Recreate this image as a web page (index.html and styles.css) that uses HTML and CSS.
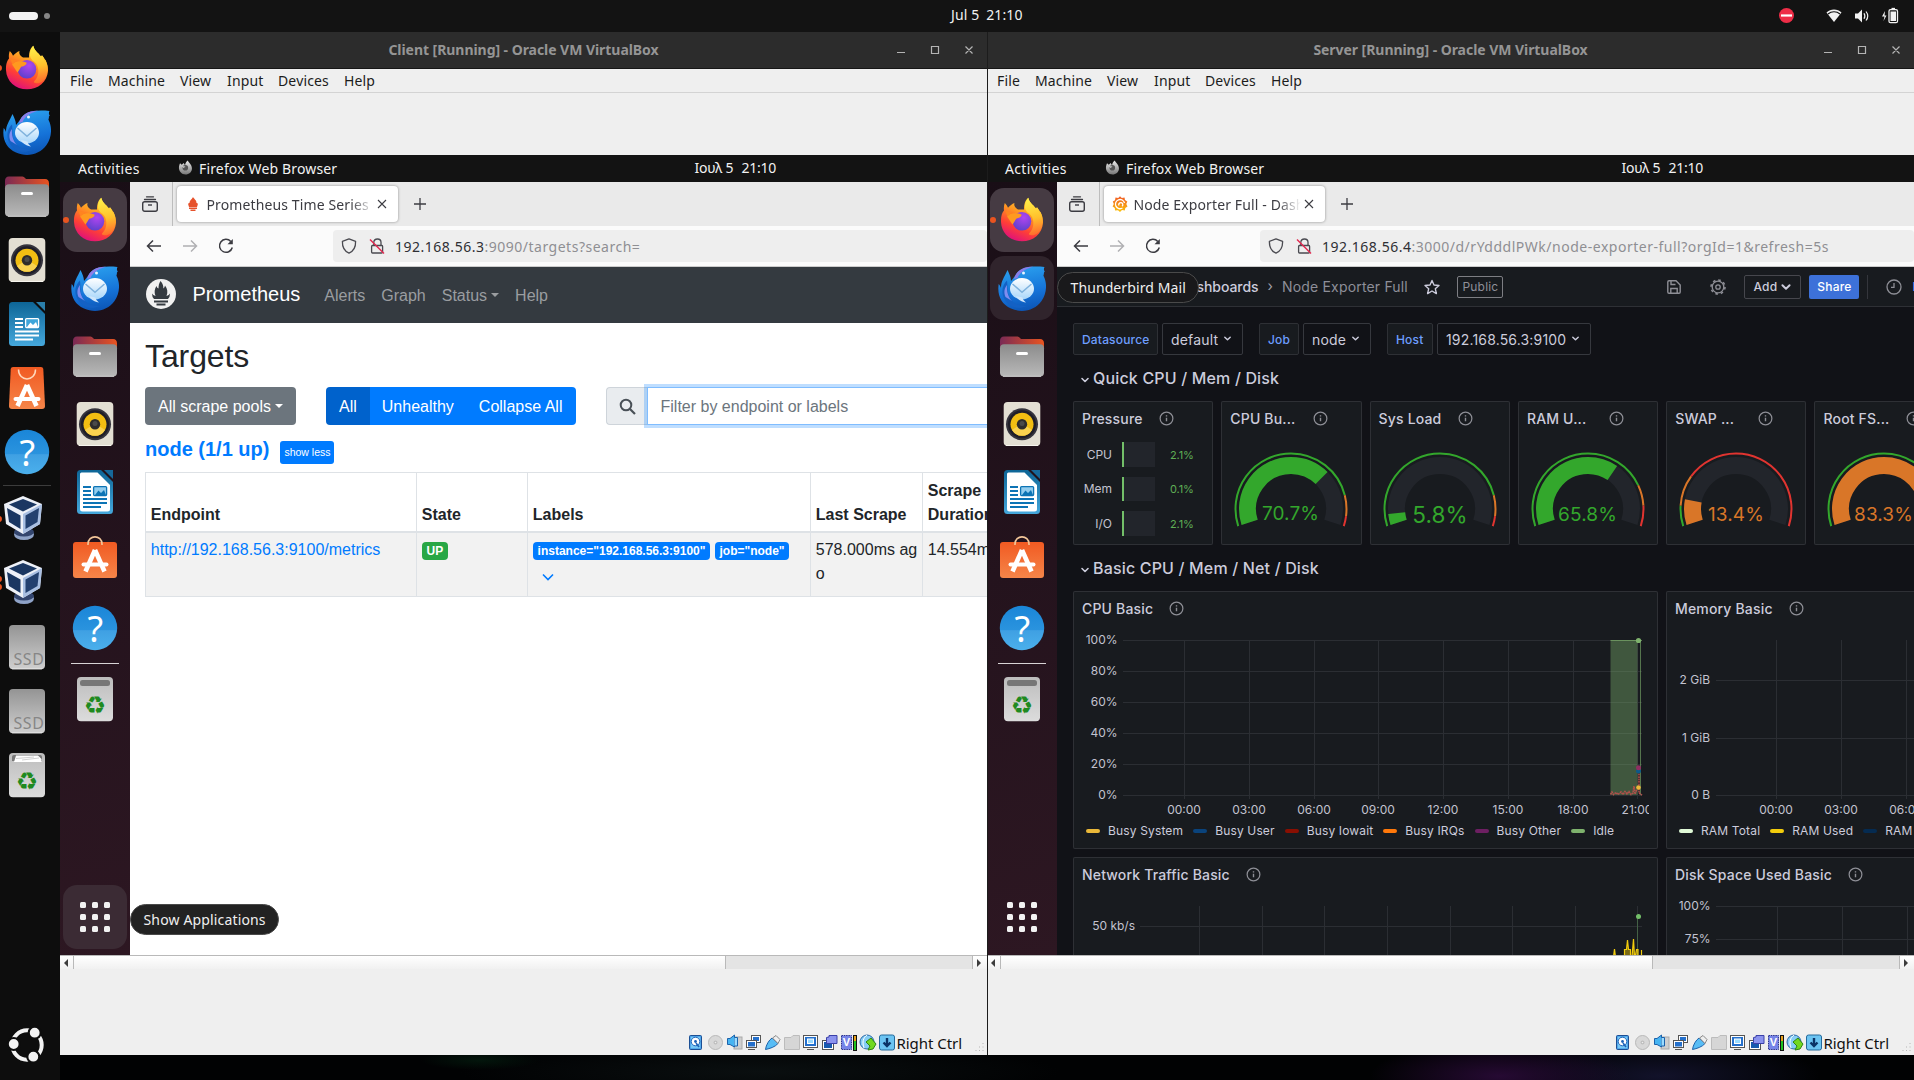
FILE: index.html
```html
<!DOCTYPE html>
<html lang="en">
<head>
<meta charset="utf-8">
<title>Desktop</title>
<link rel="stylesheet" href="styles.css">
</head>
<body>
<svg class="defs" width="0" height="0" aria-hidden="true">
  <defs>
    <linearGradient id="g-fire" x1=".8" y1="0" x2=".35" y2="1"><stop offset="0" stop-color="#ffe23c"/><stop offset=".4" stop-color="#ff9a22"/><stop offset=".72" stop-color="#ff4035"/><stop offset="1" stop-color="#e0117a"/></linearGradient>
    <linearGradient id="g-flame" x1=".4" y1="0" x2=".5" y2="1"><stop offset="0" stop-color="#fff24a"/><stop offset=".55" stop-color="#ffc02c"/><stop offset="1" stop-color="#ff6a2e"/></linearGradient>
    <radialGradient id="g-globe" cx=".6" cy=".3" r=".8"><stop offset="0" stop-color="#b145f0"/><stop offset="1" stop-color="#5540c8"/></radialGradient>
    <linearGradient id="g-bird" x1=".4" y1="0" x2=".6" y2="1"><stop offset="0" stop-color="#2aa0ee"/><stop offset=".6" stop-color="#1572d8"/><stop offset="1" stop-color="#0c55b5"/></linearGradient>
    <linearGradient id="g-mail" x1="0" y1="0" x2="0" y2="1"><stop offset="0" stop-color="#fff"/><stop offset="1" stop-color="#a8d6fa"/></linearGradient>
    <linearGradient id="g-folder" x1="0" y1="0" x2="1" y2="0"><stop offset="0" stop-color="#7a2a55"/><stop offset="1" stop-color="#e95420"/></linearGradient>
    <linearGradient id="g-gray" x1="0" y1="0" x2="0" y2="1"><stop offset="0" stop-color="#8c8c8c"/><stop offset="1" stop-color="#b9b9b9"/></linearGradient>
    <linearGradient id="g-ssd" x1="0" y1="0" x2="0" y2="1"><stop offset="0" stop-color="#949494"/><stop offset="1" stop-color="#cfcfcf"/></linearGradient>
    <linearGradient id="g-bin" x1="0" y1="0" x2="0" y2="1"><stop offset="0" stop-color="#bdbdbd"/><stop offset="1" stop-color="#dcdcdc"/></linearGradient>
    <linearGradient id="g-doc" x1="0" y1="0" x2="0" y2="1"><stop offset="0" stop-color="#0d6596"/><stop offset="1" stop-color="#45a8dc"/></linearGradient>
    <linearGradient id="g-bag" x1="0" y1="0" x2="0" y2="1"><stop offset="0" stop-color="#f15a22"/><stop offset="1" stop-color="#f58549"/></linearGradient>
    <linearGradient id="g-help" x1="0" y1="0" x2="0" y2="1"><stop offset="0" stop-color="#1a86d8"/><stop offset=".54" stop-color="#2a93de"/><stop offset=".56" stop-color="#3fa0e3"/><stop offset="1" stop-color="#4bb0ec"/></linearGradient>
    <linearGradient id="g-moon" x1="0" y1="0" x2="0" y2="1"><stop offset="0" stop-color="#eee"/><stop offset="1" stop-color="#777"/></linearGradient>
    <linearGradient id="g-graf" x1="0" y1="0" x2="0" y2="1"><stop offset="0" stop-color="#f05a28"/><stop offset="1" stop-color="#fbc30a"/></linearGradient>
    <clipPath id="axis-clip"><rect x="0" y="32" width="576" height="200"/></clipPath>

    <symbol id="i-firefox" viewBox="0 1 48 48">
      <path d="M3 27C2.800 21 4 18 6 15.500C5.600 12.500 6 10 6.800 8C8.300 9.600 9.300 11 10 12.700C12 10.500 14 9 16.500 8C15.800 10.300 16.500 12.500 20 14.500H26C26 9 27 5.500 30.300 2.700C31.300 7.500 35 9.500 38 13.500L39 12.500C44 18 45.200 23 45 27.500C44.500 39 35 46.300 24 46.300C12.500 46.300 3.500 38.500 3 27Z" fill="url(#g-fire)"/>
      <path d="M30.300 2.700C31.300 7.500 35 9.500 38 13.500L39 12.300C40.500 14 41.300 16 41.500 17.500L42.500 17C46 25 44.800 32 41 37C36 42.500 29 40 31.500 38C37 33 36.500 22 31 18.500C27 16 24.500 10 30.300 2.700Z" fill="url(#g-flame)"/>
      <circle cx="24" cy="26.300" r="9.300" fill="url(#g-globe)"/>
      <path d="M9 21.500C12 18 18 17.500 23.500 19.500C23.800 22 21 23.300 18.500 23.600C17 24.800 16.500 27.500 14.500 29.500C12.500 27 11 24 9 21.500Z" fill="#ff9a1f"/>
      <path d="M7 15C10 17 13 17 16.500 17.600C13 18.300 11 19.500 9.500 21.700Z" fill="#ff8420"/>
    </symbol>
    <symbol id="i-thunderbird" viewBox="0 0 48 48">
      <path d="M17 12C21 4 30 1.500 46.500 3C45.500 5 45.800 6 46.800 7.500C46 8 45.600 8.800 46 10C45.300 10.800 45.300 11.500 45.800 12.500C49.500 20 48.500 30 43.500 37C37 46.500 24 49.500 13 44.500C3 40 -1 31 .7 20C2 21.500 2.500 22.500 3 24C3 17 6 14 9.500 6C11 9 13 13 13 17Z" fill="url(#g-bird)"/>
      <path d="M16 15C18 7 25 2.500 35 2.800C28 4.500 22 8 19.500 14Z" fill="#8a7de8"/>
      <path d="M7 36C2 28 5 20 9 16.500C10 23 8 30 14 37C18 41 24 42 29 42C20 46 11 43 7 36Z" fill="#1461c4"/>
      <path d="M7.500 33C5.500 28 6.500 24 9 21C8.500 27 10 33 14 37Z" fill="#7f8df0"/>
      <ellipse cx="24" cy="24.700" rx="12" ry="10.600" fill="url(#g-mail)"/>
      <path d="M14.500 20L24 28.300L33.500 20" fill="none" stroke="#7fb2dd" stroke-width="1.500"/>
      <path d="M18 32C20 36 24 38 28 38.500C26 37 25 35.500 24.500 33.500Z" fill="#cfe6fb"/>
      <circle cx="25.500" cy="9" r="1.500" fill="#e8f4ff"/>
    </symbol>
    <symbol id="i-files" viewBox="0 0 48 48">
      <path d="M2 9Q2 4.500 6 4.500H19.500Q21 4.500 22 6L23 7H42Q46 7 46 11.500V20H2Z" fill="url(#g-folder)"/>
      <rect x="2" y="12.300" width="44" height="32.300" rx="4" fill="url(#g-gray)"/>
      <path d="M5 44.300H43" stroke="#d2d2d2" stroke-width="1"/>
      <rect x="18" y="20" width="12" height="3" rx="1.500" fill="#fff"/>
    </symbol>
    <symbol id="i-music" viewBox="0 0 48 48">
      <rect x="5.700" y="2" width="36.600" height="44" rx="4" fill="#e3dfd3"/>
      <path d="M8 45.500H40" stroke="#f7f5ee"/>
      <circle cx="24" cy="24.300" r="16" fill="#35343d"/><circle cx="24" cy="24.300" r="14" fill="#1f1e28"/>
      <circle cx="24" cy="24.300" r="11.500" fill="#f2be12"/><path d="M14 30A11.500 11.500 0 0 0 34 30L28 26H20Z" fill="#f9d250"/>
      <circle cx="24" cy="24.300" r="5.200" fill="#2e2c2b"/><circle cx="24" cy="23.500" r="2.500" fill="#4a4a4a"/>
    </symbol>
    <symbol id="i-writer-dark" viewBox="0 0 48 48">
      <path d="M9.500 2H30L42 14V42.500Q42 46 38.500 46H9.500Q6 46 6 42.500V5.500Q6 2 9.500 2Z" fill="url(#g-doc)"/>
      <path d="M33 2H42V11Z" fill="#2a7fab"/>
      <path d="M12 19H20M12 23H20M12 27H20M12 31.500H36M12 35.500H36M12 39.500H30" stroke="#fff" stroke-width="1.900"/>
      <rect x="22.600" y="18.600" width="13" height="9" rx="1" fill="#3fa6da" stroke="#fff" stroke-width="1.300"/><path d="M24 27L27.500 22.500L30 25L33 22L35 27Z" fill="#fff"/>
    </symbol>
    <symbol id="i-writer" viewBox="0 0 48 48">
      <path d="M9.500 2H30L42 14V42.500Q42 46 38.500 46H9.500Q6 46 6 42.500V5.500Q6 2 9.500 2Z" fill="url(#g-doc)"/>
      <path d="M10.500 4.500H26.500L39 17V41Q39 43.500 36.500 43.500H11.500Q9 43.500 9 41V6Q9 4.500 10.500 4.500Z" fill="#fff"/>
      <path d="M33 2H42V11Z" fill="#16689a"/>
      <path d="M12 19H20M12 23H20M12 27H20M12 31H36M12 35H36M12 39H30" stroke="#0d74b5" stroke-width="1.900"/>
      <rect x="22.600" y="18.600" width="13" height="9" rx="1" fill="#93cdee" stroke="#0d74b5" stroke-width="1.300"/><path d="M24 27L27.500 22.500L30 25L33 22L35 27Z" fill="#0d74b5"/>
    </symbol>
    <symbol id="i-store-dark" viewBox="0 0 48 48">
      <path d="M10 3H38Q40 3 40.300 5L42 42Q42 45 39 45H9Q6 45 6 42L7.700 5Q8 3 10 3Z" fill="url(#g-bag)"/>
      <path d="M15.500 5.500C15.500 18 32.500 18 32.500 5.500" fill="none" stroke="#ffd9bd" stroke-width="1.500"/>
      <path d="M24 21L14.500 42M24 21L33.500 42" stroke="#fff" stroke-width="4.600"/><path d="M12.500 35H35.500" stroke="#fff" stroke-width="4" stroke-linecap="round"/>
    </symbol>
    <symbol id="i-store" viewBox="0 0 48 48">
      <rect x="2" y="6" width="44" height="36" rx="3" fill="url(#g-bag)"/>
      <path d="M17 9V8C17 -1.500 31 -1.500 31 8V9" fill="none" stroke="#f4c79a" stroke-width="1.600"/>
      <path d="M24 14L14.500 35.500M24 14L33.500 35.500" stroke="#fff" stroke-width="4.600"/><path d="M12.500 28.500H35.500" stroke="#fff" stroke-width="4" stroke-linecap="round"/>
    </symbol>
    <symbol id="i-help" viewBox="0 0 48 48">
      <circle cx="24" cy="24" r="22.200" fill="url(#g-help)"/>
      <text x="24.500" y="37.500" text-anchor="middle" font-family="Noto Sans, sans-serif" font-size="36" fill="#fff">?</text>
    </symbol>
    <symbol id="i-vbox" viewBox="0 1 48 48">
      <ellipse cx="21" cy="40.500" rx="10" ry="5.500" fill="#8fa3c8"/><ellipse cx="21" cy="38" rx="10" ry="4.500" fill="#33456e"/>
      <path d="M20 2L39 10L37 30L20 40L3 30L1 10Z" fill="#eef1f8"/>
      <path d="M20 20L39 10L37 30L20 40Z" fill="#a9bfe2"/>
      <path d="M20 5L34 10.500L20 17.500L6 10.500Z" fill="#1b3762"/>
      <path d="M4 14L17.500 21.500V35L6 28Z" fill="#1b3762"/><path d="M36 14L22.500 21.500V35L34.500 28Z" fill="#23406f"/>
    </symbol>
    <symbol id="i-ssd" viewBox="0 0 48 48">
      <rect x="6" y="2" width="36" height="44.300" rx="4" fill="url(#g-ssd)"/><path d="M9 45.800H39" stroke="#e6e6e6"/>
      <text x="10.500" y="41.500" font-family="Noto Sans, sans-serif" font-size="16" textLength="30.500" fill="#868686">SSD</text>
    </symbol>
    <symbol id="i-trash-full" viewBox="0 0 48 48">
      <rect x="6" y="2" width="36" height="44.300" rx="4" fill="url(#g-bin)"/>
      <path d="M9 10V6Q9 4 11 4H37Q39 4 39 6V10Z" fill="#777"/><path d="M11 11L13 4.500H35L38.500 8V11Z" fill="#fff"/><path d="M13 7.500L31 6M19 9L36 7" stroke="#bbb" stroke-width=".7"/>
      <text x="24" y="38.500" text-anchor="middle" font-family="DejaVu Sans, sans-serif" font-size="25" fill="#1f8a1f">♻</text>
    </symbol>
    <symbol id="i-trash" viewBox="0 0 48 48">
      <rect x="6" y="2" width="36" height="44.300" rx="4" fill="url(#g-bin)"/>
      <rect x="9" y="5" width="30" height="6" rx="2.500" fill="#777"/>
      <text x="24" y="38.500" text-anchor="middle" font-family="DejaVu Sans, sans-serif" font-size="25" fill="#1f8a1f">♻</text>
    </symbol>
    <symbol id="i-ubuntu" viewBox="0 0 48 48">
      <circle cx="24" cy="24" r="14.700" fill="none" stroke="#f2f2f2" stroke-width="4"/>
      <g fill="#f2f2f2" stroke="#0d0d0d" stroke-width="2.200"><circle cx="10.700" cy="23" r="6"/><circle cx="31.700" cy="11.700" r="6"/><circle cx="30.300" cy="35.700" r="6"/></g>
    </symbol>
    <symbol id="i-apps" viewBox="0 0 48 48">
      <g fill="#f2f2f2"><rect x="9" y="9" width="6" height="6" rx="1.500"/><rect x="21" y="9" width="6" height="6" rx="1.500"/><rect x="33" y="9" width="6" height="6" rx="1.500"/><rect x="9" y="21" width="6" height="6" rx="1.500"/><rect x="21" y="21" width="6" height="6" rx="1.500"/><rect x="33" y="21" width="6" height="6" rx="1.500"/><rect x="9" y="33" width="6" height="6" rx="1.500"/><rect x="21" y="33" width="6" height="6" rx="1.500"/><rect x="33" y="33" width="6" height="6" rx="1.500"/></g>
    </symbol>
    <symbol id="i-fox-mono" viewBox="0 0 16 16">
      <path d="M1 8.500C1 6.500 1.500 5 2.200 3.500L4 5L6 3.300L7.500 5.500C8 3 9 1.500 10.500 .5C11 2.500 13 3.500 14 5.500C15.500 8.500 15 11.500 13 13.500C9.500 16.500 5 15.700 2.800 13C1.500 11.500 1 10 1 8.500Z" fill="url(#g-moon)"/><circle cx="7.800" cy="8.300" r="3" fill="#555"/><path d="M3.500 6.500L8 6.800L6 8.500Z" fill="#ccc"/>
    </symbol>
    <symbol id="i-winctl" viewBox="0 0 80 12">
      <path d="M2 8.500H10M36.500 2.500H43.500V9.500H36.500ZM70.500 2.500L77.500 9.500M77.500 2.500L70.500 9.500" fill="none" stroke="#b4b4b4" stroke-width="1.200"/>
    </symbol>
    <symbol id="i-view" viewBox="0 0 16 16"><path d="M4.500 .8H11.500M2.500 3.500H13.500" stroke="#3c3c42" stroke-width="1.300" stroke-linecap="round"/><rect x=".7" y="5.700" width="14.600" height="9.600" rx="2" fill="none" stroke="#3c3c42" stroke-width="1.400"/><path d="M6 9H10" stroke="#3c3c42" stroke-width="1.400"/></symbol>
    <symbol id="i-close" viewBox="0 0 10 10"><path d="M1 1L9 9M9 1L1 9" stroke="#3c3c42" stroke-width="1.100"/></symbol>
    <symbol id="i-plus" viewBox="0 0 14 14"><path d="M7 1V13M1 7H13" stroke="#3c3c42" stroke-width="1.300"/></symbol>
    <symbol id="i-back" viewBox="0 0 16 16"><path d="M15 8H1.500M7 2.500L1.500 8L7 13.500" fill="none" stroke="currentColor" stroke-width="1.500"/></symbol>
    <symbol id="i-reload" viewBox="0 0 16 16"><path d="M14.300 9.500A6.500 6.500 0 1 1 12.800 3.400" fill="none" stroke="#3c3c42" stroke-width="1.500"/><path d="M14.800 1V6.300H9.500Z" fill="#3c3c42"/></symbol>
    <symbol id="i-shield" viewBox="0 0 16 16"><path d="M8 .9L14.600 3.300C14.800 9 13 13 8 15.200C3 13 1.200 9 1.400 3.300Z" fill="none" stroke="#4a4a50" stroke-width="1.300" stroke-linejoin="round"/></symbol>
    <symbol id="i-lock" viewBox="0 0 16 16"><path d="M3 7.500H13Q13.600 7.500 13.600 8.500V14Q13.600 15 12.600 15H3.500Q2.600 15 2.600 14V8.500Q2.600 7.500 3.500 7.500M4.800 7.500V4.300Q5 1 8.500 1Q12 1 12 4.300V7.500" fill="none" stroke="#4a4a50" stroke-width="1.300"/><path d="M1 1.500L15 15.500" stroke="#e22850" stroke-width="1.400"/></symbol>
    <symbol id="i-info" viewBox="0 0 16 16"><circle cx="8" cy="8" r="6.800" fill="none" stroke="#8e8f96" stroke-width="1.300"/><path d="M8 7.300V11M8 4.600V5.900" stroke="#8e8f96" stroke-width="1.500"/></symbol>
    <symbol id="i-down" viewBox="0 0 10 10"><path d="M2 3.500L5 6.500L8 3.500" fill="none" stroke="currentColor" stroke-width="1.600" stroke-linecap="round" stroke-linejoin="round"/></symbol>
    <symbol id="i-arrow-l" viewBox="0 0 6 8"><path d="M5 0V8L1 4Z" fill="#3c3c3c"/></symbol>
    <symbol id="i-arrow-r" viewBox="0 0 6 8"><path d="M1 0V8L5 4Z" fill="#3c3c3c"/></symbol>
    <path id="arc-in" d="M28.630 121.440A43.500 43.500 0 1 1 111.370 121.440" pathLength="100"/>
    <path id="arc-out" d="M17.220 125.150A55.500 55.500 0 1 1 122.780 125.150" pathLength="100"/>

    <symbol id="i-status" viewBox="0 0 208 18">
      <g transform="translate(1 1)"><rect x=".5" y=".5" width="12" height="14" rx="1" fill="#2f8be0" stroke="#1c4f94"/><rect x="1.500" y="1.500" width="10" height="12" fill="#78c8f5"/><circle cx="6.500" cy="6.500" r="4.300" fill="#fff" stroke="#1d62b8"/><circle cx="6.500" cy="6.500" r="1.400" fill="#1d62b8"/><path d="M7 8L10 12" stroke="#1d62b8" stroke-width="1.500"/></g>
      <circle cx="27.500" cy="8.500" r="7" fill="#d8d8d8" stroke="#b9b9b9"/><circle cx="27.500" cy="8.500" r="2" fill="#bdbdbd"/><circle cx="27.500" cy="8.500" r=".8" fill="#eee"/>
      <rect x="46" y="3" width="8" height="12" fill="#cfcfcf" stroke="#aaa"/><path d="M39.500 4.500H42L46.500 1V13L42 10.500H39.500Z" fill="#46b4f2" stroke="#1c62ab"/><path d="M46.500 3.500H49.500V12H46.500" fill="#9bdcff" stroke="#1c62ab"/>
      <g stroke="#555"><rect x="63.500" y="1.500" width="9" height="7" fill="#fff"/><rect x="65" y="3" width="6" height="4" fill="#2470cc" stroke="none"/><rect x="58.500" y="6.500" width="10" height="7" fill="#fff"/><rect x="60" y="8" width="7" height="4.500" fill="#2470cc" stroke="none"/><path d="M60 15.500H67"/></g>
      <path d="M77.500 15.500C78 11 81 6 84 4L90 9.500C87 13 82 14.500 77.500 15.500Z" fill="#58bdf5" stroke="#1c62ab"/><path d="M84.500 4L88 1.500L92 5.500L90 9.500Z" fill="#eee" stroke="#888"/>
      <path d="M96.500 3.500H103L105 1.500H111.500V15.500H96.500Z" fill="#d6d6d6" stroke="#bcbcbc"/>
      <rect x="115.500" y="1.500" width="14" height="12" fill="#fff" stroke="#555"/><rect x="117" y="3" width="11" height="9" fill="#2470cc"/><rect x="119.500" y="5" width="6" height="4.500" fill="#9bdcff" stroke="#fff"/><path d="M119 15.500H126" stroke="#555"/>
      <rect x="134.500" y="6.500" width="11" height="9" fill="#fff" stroke="#555"/><rect x="136" y="8" width="8" height="6" fill="#1659ae"/><path d="M138.500 3.500L141 3V1.500H149V9.500H138.500Z" fill="#8b93ee" stroke="#3b40a8"/>
      <rect x="153.500" y="1.500" width="10" height="14" fill="#7684e8" stroke="#2b338f" stroke-dasharray="1.500 .8"/><text x="158.500" y="12" text-anchor="middle" font-family="Liberation Sans, sans-serif" font-weight="bold" font-size="11" fill="#fff">V</text><rect x="165.500" y="1.500" width="3" height="15" fill="#1fc21f" stroke="#111"/><path d="M167 2V7" stroke="#e8a01c" stroke-width="2"/>
      <circle cx="179" cy="8" r="7" fill="#86cdf5" stroke="#2c6aa8"/><path d="M179 1C175 4 174 8 176 14" fill="none" stroke="#fff"/><path d="M178 8L183 4L188 10L185 15L180 16L182 12Z" fill="#72d820" stroke="#2d8412"/>
      <rect x="191.500" y="1" width="15" height="15" rx="2" fill="#6cc4f2" stroke="#246a9c"/><path d="M199 4V12M195.500 8.500L199 12L202.500 8.500" fill="none" stroke="#0b3366" stroke-width="2.400"/>
    </symbol>
    <symbol id="i-grip" viewBox="0 0 12 12"><path d="M10 2V3M6.500 5.500V6.500M10 5.500V6.500M3 9V10M6.500 9V10M10 9V10" stroke="#b5b5b5" stroke-width="1"/></symbol>
  </defs>
</svg>

<header class="topbar">
  <div class="workspaces"><span class="pill"></span><span class="dot"></span></div>
  <div class="clock"><span>Jul 5</span><span>21:10</span></div>
  <svg class="tray" width="120" height="20" viewBox="0 0 120 20">
    <circle cx="12.500" cy="9.500" r="7.500" fill="#ee2d47"/><path d="M7 9.500H18" stroke="#fff" stroke-width="2.200"/>
    <path d="M52.500 6.500C56.500 2.500 63.500 2.500 67.500 6.500L60 16Z" fill="#f2f2f2"/><path d="M54 8C57.500 5 62.500 5 66 8" fill="none" stroke="#131313" stroke-width="1.200"/>
    <path d="M81 7.500H84L88 3.500V16.500L84 12.500H81Z" fill="#f2f2f2"/><path d="M90 7.200Q91.700 10 90 12.800M92 5.500Q95.500 10 92 14.500" fill="none" stroke="#f2f2f2" stroke-width="1.200"/>
    <path d="M111 5L108 10.500H110.500L109.500 15L112.500 9.500H110.500Z" fill="#f2f2f2"/><rect x="115" y="3.700" width="8.500" height="13" rx="1.500" fill="none" stroke="#f2f2f2" stroke-width="1.300"/><rect x="116.500" y="5.500" width="5.500" height="9.500" fill="#f2f2f2"/><path d="M117.500 2.500H121" stroke="#f2f2f2" stroke-width="1.300"/>
  </svg>
</header>

<div class="desktop">
  <nav class="dock host-dock">
    <div class="tile"><svg><use href="#i-firefox"/></svg><i class="run"></i></div>
    <div class="tile"><svg><use href="#i-thunderbird"/></svg></div>
    <div class="tile"><svg><use href="#i-files"/></svg></div>
    <div class="tile"><svg><use href="#i-music"/></svg></div>
    <div class="tile"><svg><use href="#i-writer-dark"/></svg></div>
    <div class="tile"><svg><use href="#i-store-dark"/></svg></div>
    <div class="tile"><svg><use href="#i-help"/></svg></div>
    <hr>
    <div class="tile"><svg><use href="#i-vbox"/></svg><i class="run"></i></div>
    <div class="tile"><svg><use href="#i-vbox"/></svg><i class="run up"></i><i class="run low"></i></div>
    <div class="tile"><svg><use href="#i-ssd"/></svg></div>
    <div class="tile"><svg><use href="#i-ssd"/></svg></div>
    <div class="tile"><svg><use href="#i-trash-full"/></svg></div>
    <div class="tile last"><svg><use href="#i-ubuntu"/></svg></div>
  </nav>

  <section class="window">
    <div class="titlebar"><h1>Client [Running] - Oracle VM VirtualBox</h1><svg class="winctl"><use href="#i-winctl"/></svg></div>
    <div class="menubar"><span>File</span><span>Machine</span><span>View</span><span>Input</span><span>Devices</span><span>Help</span></div>
    <div class="filler"></div>
    <div class="guest">
      <div class="guest-bar"><span>Activities</span><svg><use href="#i-fox-mono"/></svg><span>Firefox Web Browser</span><span class="gclock"><span>Ιουλ 5</span><span>21:10</span></span></div>
      <nav class="dock guest-dock">
        <div class="tile active"><svg><use href="#i-firefox"/></svg><i class="run"></i></div>
        <div class="tile"><svg><use href="#i-thunderbird"/></svg></div>
        <div class="tile"><svg><use href="#i-files"/></svg></div>
        <div class="tile"><svg><use href="#i-music"/></svg></div>
        <div class="tile"><svg><use href="#i-writer"/></svg></div>
        <div class="tile"><svg><use href="#i-store"/></svg></div>
        <div class="tile"><svg><use href="#i-help"/></svg></div>
        <hr>
        <div class="tile"><svg><use href="#i-trash"/></svg></div>
        <div class="tile last focus"><svg><use href="#i-apps"/></svg><span class="tip tip-apps">Show Applications</span></div>
      </nav>
      <main class="browser">
        <div class="tabs">
          <div class="view"><svg><use href="#i-view"/></svg></div>
          <div class="tab">
            <svg class="fav" viewBox="0 0 16 16"><path d="M8 1C9 3 11.500 4 11.500 7Q13 6.500 12.800 8.500L12 11H4L3.200 8.500Q3 6.500 4.500 7C4.500 4 7 3.500 8 1Z" fill="#e6522c"/><path d="M4 12.200H12M5.500 14.300H10.500" stroke="#e6522c" stroke-width="1.400"/></svg>
            <span class="tab-title">Prometheus Time Series Collection</span><svg class="x"><use href="#i-close"/></svg>
          </div>
          <svg class="plus"><use href="#i-plus"/></svg>
        </div>
        <div class="toolbar">
          <svg class="nav-ic"><use href="#i-back"/></svg><svg class="nav-ic fwd"><use href="#i-back"/></svg><svg class="nav-ic"><use href="#i-reload"/></svg>
          <div class="url"><svg><use href="#i-shield"/></svg><svg><use href="#i-lock"/></svg><span><b>192.168.56.3</b>:9090/targets?search=</span></div>
        </div>
        <div class="prom">
          <div class="navbar">
            <svg width="30" height="30" viewBox="0 0 30 30"><circle cx="15" cy="15" r="15" fill="#f1f1f1"/><path d="M14.500 2C17 5 17.500 7 17.300 9.500Q18.800 8.500 19 6.500C21.500 10 22 13 20.500 17Q23 16 24 14.500Q24 18 22 20H8Q6 18 6 14.500Q7 16 9.500 17C8 13 8.500 10 10.500 7Q11 9 12.500 9.500C12.500 6.500 13 4.500 14.500 2Z" fill="#343a40"/><path d="M8 22.500H22M10.500 25.500H19.500" stroke="#343a40" stroke-width="2.200"/></svg>
            <span class="brand">Prometheus</span><a>Alerts</a><a>Graph</a><a class="caret">Status</a><a>Help</a>
          </div>
          <h2>Targets</h2>
          <div class="controls">
            <button class="btn pools caret">All scrape pools</button>
            <div class="btn-group"><button class="btn on">All</button><button class="btn">Unhealthy</button><button class="btn">Collapse All</button></div>
            <div class="search"><span class="mag"><svg width="17" height="17" viewBox="0 0 17 17"><circle cx="7" cy="7" r="5.300" fill="none" stroke="#495057" stroke-width="2"/><path d="M11 11L16 16" stroke="#495057" stroke-width="2.200"/></svg></span><input type="text" placeholder="Filter by endpoint or labels"></div>
          </div>
          <div class="pool"><h3>node (1/1 up)</h3><button class="less">show less</button></div>
          <table>
            <colgroup><col class="c1"><col class="c2"><col class="c3"><col class="c4"><col class="c5"></colgroup>
            <thead><tr><th>Endpoint</th><th>State</th><th>Labels</th><th>Last Scrape</th><th>Scrape Duration</th></tr></thead>
            <tbody><tr>
              <td><a>http://192.168.56.3:9100/metrics</a></td><td><span class="badge up">UP</span></td>
              <td><span class="badge">instance="192.168.56.3:9100"</span> <span class="badge">job="node"</span><svg class="more" width="14" height="14" viewBox="0 0 14 14"><path d="M2 4.500L7 9.500L12 4.500" fill="none" stroke="#007bff" stroke-width="1.600"/></svg></td>
              <td class="break">578.000ms ago</td><td>14.554ms</td>
            </tr></tbody>
          </table>
        </div>
      </main>
    </div>
    <div class="scroll"><svg><use href="#i-arrow-l"/></svg><span class="thumb"></span><span class="rest"></span><svg><use href="#i-arrow-r"/></svg></div>
    <div class="status"><svg class="status-ic"><use href="#i-status"/></svg><span>Right Ctrl</span><svg class="grip"><use href="#i-grip"/></svg></div>
  </section>

  <section class="window second">
    <div class="titlebar"><h1>Server [Running] - Oracle VM VirtualBox</h1><svg class="winctl"><use href="#i-winctl"/></svg></div>
    <div class="menubar"><span>File</span><span>Machine</span><span>View</span><span>Input</span><span>Devices</span><span>Help</span></div>
    <div class="filler"></div>
    <div class="guest">
      <div class="guest-bar"><span>Activities</span><svg><use href="#i-fox-mono"/></svg><span>Firefox Web Browser</span><span class="gclock"><span>Ιουλ 5</span><span>21:10</span></span></div>
      <nav class="dock guest-dock">
        <div class="tile active"><svg><use href="#i-firefox"/></svg><i class="run"></i></div>
        <div class="tile hover"><svg><use href="#i-thunderbird"/></svg><span class="tip tip-mail">Thunderbird Mail</span></div>
        <div class="tile"><svg><use href="#i-files"/></svg></div>
        <div class="tile"><svg><use href="#i-music"/></svg></div>
        <div class="tile"><svg><use href="#i-writer"/></svg></div>
        <div class="tile"><svg><use href="#i-store"/></svg></div>
        <div class="tile"><svg><use href="#i-help"/></svg></div>
        <hr>
        <div class="tile"><svg><use href="#i-trash"/></svg></div>
        <div class="tile last"><svg><use href="#i-apps"/></svg></div>
      </nav>
      <main class="browser">
        <div class="tabs">
          <div class="view"><svg><use href="#i-view"/></svg></div>
          <div class="tab">
            <svg class="fav" viewBox="0 0 16 16"><path d="M8 .3L9.800 2L12.500 1.500L13 4L15.300 5.500L14.300 8L15.500 10.500L13.300 12L12.800 14.500L10 14L8 16L6 14.200L3 14.500L2.800 12L.6 10.500L1.800 8L.8 5.500L3 4.200L3.500 1.500L6.200 2Z" fill="url(#g-graf)"/><path d="M12.500 7A4.600 4.600 0 1 0 10.500 12M7 9.500A2 2 0 1 1 10 10.300" fill="none" stroke="#fff" stroke-width="1.300"/></svg>
            <span class="tab-title">Node Exporter Full - Dashboards</span><svg class="x"><use href="#i-close"/></svg>
          </div>
          <svg class="plus"><use href="#i-plus"/></svg>
        </div>
        <div class="toolbar">
          <svg class="nav-ic"><use href="#i-back"/></svg><svg class="nav-ic fwd"><use href="#i-back"/></svg><svg class="nav-ic"><use href="#i-reload"/></svg>
          <div class="url"><svg><use href="#i-shield"/></svg><svg><use href="#i-lock"/></svg><span><b>192.168.56.4</b>:3000/d/rYdddlPWk/node-exporter-full?orgId=1&amp;refresh=5s</span></div>
        </div>
        <div class="grafana">
          <div class="gnav">
            <span class="crumb">Dashboards</span><span class="sep">›</span><span class="here">Node Exporter Full</span>
            <svg class="star" viewBox="0 0 16 16"><path d="M8 1.500L10 6L15 6.500L11.300 9.700L12.400 14.600L8 12L3.600 14.600L4.700 9.700L1 6.500L6 6Z" fill="none" stroke="#ccccdc" stroke-width="1.400" stroke-linejoin="round"/></svg>
            <span class="public">Public</span>
            <svg class="save" viewBox="0 0 16 16"><path d="M1.800 3Q1.800 1.800 3 1.800H10L14.200 6V13Q14.200 14.200 13 14.200H3Q1.800 14.200 1.800 13ZM5 2V5.500H9.500M4.800 14V9.500H11.200V14" fill="none" stroke="#8e8f96" stroke-width="1.400"/></svg>
            <svg class="gear" viewBox="0 0 16 16"><circle cx="8" cy="8" r="5.800" fill="none" stroke="#8e8f96" stroke-width="1.300"/><circle cx="8" cy="8" r="7" fill="none" stroke="#8e8f96" stroke-width="1.600" stroke-dasharray="2.600 2.900"/><circle cx="8" cy="8" r="2.200" fill="none" stroke="#8e8f96" stroke-width="1.300"/></svg>
            <span class="add">Add <svg width="12" height="12"><use href="#i-down"/></svg></span>
            <span class="share">Share</span>
            <span class="divider"></span>
            <svg class="time" viewBox="0 0 16 16"><circle cx="8" cy="8" r="7" fill="none" stroke="#8e8f96" stroke-width="1.300"/><path d="M8 4V8.300H5" fill="none" stroke="#8e8f96" stroke-width="1.300"/></svg>
            <span class="range">Last 24 hours</span>
          </div>
          <div class="vars">
            <span class="vl w85">Datasource</span><span class="vs w81">default <svg width="9" height="9"><use href="#i-down"/></svg></span>
            <span class="vl w40">Job</span><span class="vs w68">node <svg width="9" height="9"><use href="#i-down"/></svg></span>
            <span class="vl w46">Host</span><span class="vs w154">192.168.56.3:9100 <svg width="9" height="9"><use href="#i-down"/></svg></span>
          </div>
          <div class="row-head"><svg width="10" height="10"><use href="#i-down"/></svg>Quick CPU / Mem / Disk</div>
          <div class="stats">
            <article class="panel"><header><span>Pressure</span><svg><use href="#i-info"/></svg></header>
              <svg class="stat" viewBox="0 32 140 112">
                <g fill="#22252b"><rect x="49" y="41" width="33" height="25"/><rect x="49" y="76" width="33" height="24"/><rect x="49" y="110" width="33" height="25"/></g>
                <g fill="#73bf69"><rect x="49" y="41" width="2" height="25"/><rect x="49" y="76" width="2" height="24"/><rect x="49" y="110" width="2" height="25"/></g>
                <g class="ax end"><text x="39" y="57.500">CPU</text><text x="39" y="92">Mem</text><text x="39" y="127">I/O</text></g>
                <g class="val"><text x="97" y="57.500">2.1%</text><text x="97" y="92">0.1%</text><text x="97" y="127">2.1%</text></g>
              </svg></article>
            <article class="panel gauge"><header><span>CPU Bu...</span><svg><use href="#i-info"/></svg></header>
              <svg class="stat" viewBox="0 32 140 112"><use href="#arc-in" class="track"/><use href="#arc-in" class="fill green" stroke-dasharray="70.700 200"/>
                <use href="#arc-out" class="ring green" stroke-dasharray="85 200"/><use href="#arc-out" class="ring orange" stroke-dasharray="10 200" stroke-dashoffset="-85"/><use href="#arc-out" class="ring red" stroke-dasharray="5 200" stroke-dashoffset="-95"/>
                <text x="69.500" y="119" font-size="19" class="tg">70.7%</text></svg></article>
            <article class="panel gauge"><header><span class="full">Sys Load</span><svg><use href="#i-info"/></svg></header>
              <svg class="stat" viewBox="0 32 140 112"><use href="#arc-in" class="track"/><use href="#arc-in" class="fill green" stroke-dasharray="5.800 200"/>
                <use href="#arc-out" class="ring green" stroke-dasharray="85 200"/><use href="#arc-out" class="ring orange" stroke-dasharray="10 200" stroke-dashoffset="-85"/><use href="#arc-out" class="ring red" stroke-dasharray="5 200" stroke-dashoffset="-95"/>
                <text x="70" y="122" font-size="22.500" class="tg">5.8%</text></svg></article>
            <article class="panel gauge"><header><span>RAM U...</span><svg><use href="#i-info"/></svg></header>
              <svg class="stat" viewBox="0 32 140 112"><use href="#arc-in" class="track"/><use href="#arc-in" class="fill green" stroke-dasharray="65.800 200"/>
                <use href="#arc-out" class="ring green" stroke-dasharray="80 200"/><use href="#arc-out" class="ring orange" stroke-dasharray="10 200" stroke-dashoffset="-80"/><use href="#arc-out" class="ring red" stroke-dasharray="10 200" stroke-dashoffset="-90"/>
                <text x="69.500" y="120" font-size="19" class="tg">65.8%</text></svg></article>
            <article class="panel gauge"><header><span>SWAP ...</span><svg><use href="#i-info"/></svg></header>
              <svg class="stat" viewBox="0 32 140 112"><use href="#arc-in" class="track"/><use href="#arc-in" class="fill orange" stroke-dasharray="13.400 200"/>
                <use href="#arc-out" class="ring green" stroke-dasharray="10 200"/><use href="#arc-out" class="ring orange" stroke-dasharray="15 200" stroke-dashoffset="-10"/><use href="#arc-out" class="ring red" stroke-dasharray="75 200" stroke-dashoffset="-25"/>
                <text x="70" y="120" font-size="19" class="to">13.4%</text></svg></article>
            <article class="panel gauge"><header><span>Root FS...</span><svg><use href="#i-info"/></svg></header>
              <svg class="stat" viewBox="0 32 140 112"><use href="#arc-in" class="track"/><use href="#arc-in" class="fill orange" stroke-dasharray="83.300 200"/>
                <use href="#arc-out" class="ring green" stroke-dasharray="80 200"/><use href="#arc-out" class="ring orange" stroke-dasharray="10 200" stroke-dashoffset="-80"/>
                <text x="69.500" y="120" font-size="19" class="to">83.3%</text></svg></article>
          </div>
          <div class="row-head"><svg width="10" height="10"><use href="#i-down"/></svg>Basic CPU / Mem / Net / Disk</div>
          <div class="charts">
            <article class="panel"><header><span>CPU Basic</span><svg><use href="#i-info"/></svg></header>
              <svg class="chart" viewBox="0 32 585 196">
                <path class="grid" d="M50 49.500H569M50 80.500H569M50 111.500H569M50 142.500H569M50 173.500H569M50 204.500H569M111.500 49V208M176.500 49V208M241.500 49V208M305.500 49V208M370.500 49V208M435.500 49V208M500.500 49V208M564.500 49V208"/>
                <rect x="537.500" y="49" width="27" height="155" fill="#7eb26d" fill-opacity=".4"/><path d="M537.500 49.500H569M567.500 49V204" stroke="#7eb26d" stroke-opacity=".6" fill="none"/>
                <path d="M537.500 203.500L539 201L540.500 203.500L543 201.500L545 203.500L548 201L550 203.500L552 200.500L554 203L556 200.500L558 203.500L560 202L561 195L562 203L564 198M566 178V202L569 204" fill="none" stroke="#b0504c" stroke-width="1.600" stroke-dasharray="1.800 .6"/>
                <circle cx="565.500" cy="180" r="2.500" fill="#0a5a8a"/><circle cx="565.500" cy="176.700" r="2.500" fill="#8f2f62"/><circle cx="565.500" cy="196.500" r="2.300" fill="#eab839"/><circle cx="565.500" cy="49.500" r="2.600" fill="#7eb26d"/>
                <g class="ax end"><text x="44.500" y="53">100%</text><text x="44.500" y="84">80%</text><text x="44.500" y="115">60%</text><text x="44.500" y="146">40%</text><text x="44.500" y="177">20%</text><text x="44.500" y="208">0%</text></g>
                <g class="ax mid" clip-path="url(#axis-clip)"><text x="111" y="223">00:00</text><text x="176" y="223">03:00</text><text x="241" y="223">06:00</text><text x="305" y="223">09:00</text><text x="370" y="223">12:00</text><text x="435" y="223">15:00</text><text x="500" y="223">18:00</text><text x="564" y="223">21:00</text></g>
              </svg>
              <div class="legend"><span class="k1">Busy System</span><span class="k2">Busy User</span><span class="k3">Busy Iowait</span><span class="k4">Busy IRQs</span><span class="k5">Busy Other</span><span class="k6">Idle</span></div>
            </article>
            <article class="panel"><header><span>Memory Basic</span><svg><use href="#i-info"/></svg></header>
              <svg class="chart" viewBox="0 32 585 196">
                <path class="grid" d="M50 89.500H569M50 147.500H569M50 204.500H569M110.500 49V208M175.500 49V208M240.500 49V208"/>
                <g class="ax end"><text x="44" y="93">2 GiB</text><text x="44" y="151">1 GiB</text><text x="44" y="208">0 B</text></g>
                <g class="ax mid"><text x="110" y="223">00:00</text><text x="175" y="223">03:00</text><text x="240" y="223">06:00</text></g>
              </svg>
              <div class="legend"><span class="k7">RAM Total</span><span class="k8">RAM Used</span><span class="k9">RAM Cache + Buffer</span></div>
            </article>
            <article class="panel"><header><span>Network Traffic Basic</span><svg><use href="#i-info"/></svg></header>
              <svg class="chart" viewBox="0 32 585 196">
                <path class="grid" d="M67 69.500H569M126.500 49V208M189.500 49V208M251.500 49V208M314.500 49V208M377.500 49V208M439.500 49V208M502.500 49V208M564.500 49V208"/>
                <path d="M564.500 60V100" stroke="#73bf69" stroke-opacity=".35"/><circle cx="565.500" cy="59.500" r="2.500" fill="#73bf69"/>
                <path d="M540.500 100L541.500 92L542.500 100M551.500 100V92.500H553.500L554.500 83L555.500 92.500H557.500V100M559 100L560.500 82L561.500 100M562.500 98L563.500 92.500H565V100M568.500 100V93" fill="#f2cc0c" fill-opacity=".45" stroke="#f2cc0c" stroke-width="1.200"/>
                <g class="ax end"><text x="62" y="73">50 kb/s</text></g>
              </svg>
            </article>
            <article class="panel"><header><span>Disk Space Used Basic</span><svg><use href="#i-info"/></svg></header>
              <svg class="chart" viewBox="0 32 585 196">
                <path class="grid" d="M50 49.500H569M50 82.500H569M111.500 49V208M176.500 49V208M241.500 49V208"/>
                <g class="ax end"><text x="44.500" y="53">100%</text><text x="44.500" y="86">75%</text></g>
              </svg>
            </article>
          </div>
        </div>
      </main>
    </div>
    <div class="scroll"><svg><use href="#i-arrow-l"/></svg><span class="thumb"></span><span class="rest"></span><svg><use href="#i-arrow-r"/></svg></div>
    <div class="status"><svg class="status-ic"><use href="#i-status"/></svg><span>Right Ctrl</span><svg class="grip"><use href="#i-grip"/></svg></div>
  </section>
</div>
</body>
</html>
```
FILE: styles.css
```css
* { box-sizing: border-box; }
html, body { margin: 0; height: 1080px; overflow: hidden; }
body {
  display: grid;
  grid-template-rows: 32px 1fr;
  width: 1914px;
  font: 14px "Noto Sans", sans-serif;
  letter-spacing: .15px;
  background: #000;
  white-space: nowrap;
}
svg { display: block; flex: none; overflow: visible; }
h1, h2, h3 { margin: 0; }
button, input { font: inherit; letter-spacing: inherit; border: 0; margin: 0; }
.defs { position: absolute; }

/* host shell */
.topbar { display: grid; grid-template-columns: 951px 1fr auto; align-items: center; background: #131313; color: #f2f2f2; padding-right: 20px; }
.workspaces { display: flex; align-items: center; gap: 6px; padding-left: 9px; }
.pill { width: 29px; height: 8px; border-radius: 4px; background: #f2f2f2; }
.dot { width: 6px; height: 6px; border-radius: 3px; background: #868686; }
.clock { display: flex; gap: 7px; letter-spacing: .1px; padding-bottom: 3px; }
.tray { margin-top: -1px; }

.desktop {
  display: grid;
  grid-template-columns: 60px 927px 927px;
  background:
    radial-gradient(ellipse 60px 10px at 480px 1028px, #03160c, transparent),
    radial-gradient(ellipse 300px 30px at 760px 1040px, #0a0f10, transparent),
    radial-gradient(ellipse 130px 34px at 1500px 1044px, #260a33, transparent),
    radial-gradient(ellipse 160px 36px at 1660px 1044px, #12122a, transparent), #010203;
}
.dock { display: flex; flex-direction: column; align-items: center; }
.dock svg { width: 48px; height: 48px; }
.tile { position: relative; display: grid; place-items: center; width: 64px; height: 64px; flex: none; border-radius: 14px; }
.host-dock { background: #0d0d0d; padding: 4px 6px 3px 0; height: 1048px; }
.host-dock .tile { width: 54px; }
.host-dock .last { margin-top: auto; margin-bottom: 0; }
.host-dock hr { width: 48px; height: 1px; margin: 1px 0; border: 0; background: #3c3c3c; flex: none; }
.run { position: absolute; left: 0; top: 29px; width: 6px; height: 6px; border-radius: 3px; background: #e95420; }
.host-dock .run { left: -4px; }
.host-dock .run.up { top: 25px; }
.host-dock .run.low { top: 33px; }

/* VM window */
.window { position: relative; display: flex; flex-direction: column; width: 927px; height: 1023px; overflow: hidden; background: #efefef; }
.window.second::before { content: ""; position: absolute; z-index: 5; left: 0; top: 0; width: 1px; height: 100%; background: #1c1c1c; }
.titlebar { display: grid; align-items: center; justify-items: center; height: 37px; background: #2c2c2c; border-bottom: 1px solid #161616; color: #959595; }
.titlebar > * { grid-area: 1 / 1; }
.titlebar h1 { padding-bottom: 2px; font-size: 14px; font-weight: 700; letter-spacing: -.05px; }
.winctl { width: 80px; height: 12px; justify-self: end; margin-right: 12px; }
.menubar { display: grid; grid-template-columns: 38px 72px 47px 51px 66px auto; justify-content: start; align-items: center; height: 24px; padding-left: 10px; border-bottom: 1px solid #d3d3d3; color: #1c1c1c; letter-spacing: .15px; }
.filler { height: 62px; }
.scroll { display: flex; align-items: center; height: 14px; border-top: 1px solid #b9b9b9; background: linear-gradient(#fff, #f1f1f1); padding-right: 5px; }
.scroll svg { width: 6px; height: 8px; margin-left: 3px; }
.thumb { width: 653px; height: 13px; margin-left: 4px; border-left: 1px solid #b9b9b9; border-right: 1px solid #b9b9b9; }
.rest { flex: 1; height: 13px; background: #e4e4e4; border-right: 1px solid #b9b9b9; }
.scroll svg:last-child { margin-left: 3px; }
.status { display: flex; flex: 1; align-items: flex-end; padding: 0 2px 2px 0; justify-content: flex-end; color: #111; font-size: 15px; letter-spacing: -.05px; line-height: 20px; }
.status-ic { width: 208px; height: 18px; margin: 0 1px 1px 0; }
.grip { width: 12px; height: 12px; margin-left: 11px; }

/* guest desktop */
.guest { display: grid; grid-template: 27px 773px / 70px 857px; height: 800px; overflow: hidden; }
.guest-bar { grid-column: 1 / 3; display: grid; grid-template-columns: 117px 21px 495.500px auto; align-items: center; padding-left: 1px; background: #131313; color: #f2f2f2; }
.guest-bar > span:first-child { padding-left: 17px; letter-spacing: .35px; }
.guest-bar svg { width: 15px; height: 15px; margin-top: -2px; }
.gclock { display: flex; gap: 8px; letter-spacing: -.2px; padding-bottom: 2px; }
.guest-dock { position: relative; z-index: 2; height: 773px; padding-top: 6px; gap: 4px; background: linear-gradient(165deg, #190e16, #24131d 50%, #2d1722); }
.guest-dock hr { width: 48px; height: 1px; margin: -1px 0; border: 0; background: #d8d4d6; flex: none; }
.guest-dock .last { margin-top: auto; margin-bottom: 6px; }
.tile.active { background: #463b43; }
.tile.focus { background: #3b2b34; }
.tile.hover { background: #30242c; }
.tip { position: absolute; left: 67px; display: flex; align-items: center; height: 31px; padding: 0 12.500px; border: 1px solid #4a4a4a; border-radius: 16px; color: #f0f0f0; background: #222; }
.tip-apps { top: 19px; }
.tip-mail { top: 16px; left: 67px; background: #19191b; letter-spacing: .1px; }

/* browser */
.browser { min-width: 0; overflow: hidden; background: #fff; color: #3c3c42; }
.tabs { display: flex; align-items: center; height: 44px; background: #eaeaea; }
.view { display: grid; place-items: center; width: 43px; height: 44px; border-right: 1px solid #bdbdbd; padding-right: 2px; }
.view svg { width: 16px; height: 16px; }
.tab { display: flex; align-items: center; width: 221px; height: 36px; margin-left: 4px; padding-left: 8px; border-radius: 4px; background: #fff; box-shadow: 0 0 3px rgba(0,0,0,.4); }
.fav { width: 16px; height: 16px; margin-right: 5px; }
.tab-title { width: 168px; overflow: hidden; padding-left: .5px; letter-spacing: .12px; -webkit-mask-image: linear-gradient(90deg, #000 86%, transparent); mask-image: linear-gradient(90deg, #000 86%, transparent); }
.x { width: 10px; height: 10px; margin-left: 3px; }
.plus { width: 14px; height: 14px; margin-left: 14.500px; }
.toolbar { display: flex; align-items: center; height: 41px; background: #fbfbfb; border-bottom: 1px solid #ccc; padding-left: 16px; }
.nav-ic { width: 16px; height: 16px; margin-right: 20px; }
.nav-ic.fwd { transform: scaleX(-1); color: #b0b0b3; }
.url { display: flex; align-items: center; width: 700px; height: 32px; margin-left: 79px; padding-left: 8px; border-radius: 4px; background: #eee; color: #8f8f93; letter-spacing: .51px; }
.url svg { width: 16px; height: 16px; margin-right: 12px; }
.url svg + svg { margin-right: 10px; }
.url b { font-weight: 400; color: #2f2f34; }

/* prometheus */
.prom { font: 16px/24px "Liberation Sans", Arial, sans-serif; letter-spacing: 0; color: #212529; }
.navbar { display: flex; align-items: center; gap: 16px; height: 56px; padding: 0 0 2px 16px; background: #343a40; color: #9a9da0; }
.brand { font-size: 20px; color: #fff; margin: 0 8px 0 .5px; padding: 0 0 1px; }
.navbar a { padding-top: 4px; }
.caret::after { content: ""; display: inline-block; margin-left: 4px; vertical-align: 4px; border: 4.500px solid transparent; border-top-color: currentColor; border-bottom: 0; }
.prom h2 { font-size: 32px; font-weight: 400; line-height: 38px; margin: 14px 0 12px 15px; letter-spacing: -.1px; }
.controls { display: flex; margin-left: 15px; height: 38px; }
.btn { flex: none; height: 38px; padding: 0 13px; color: #fff; background: #007bff; line-height: 39.500px; }
.pools { width: 151px; border-radius: 4px; background: #6c757d; }
.btn-group { display: flex; flex: none; width: 250px; margin: 0 30px; border-radius: 4px; overflow: hidden; }
.btn-group .btn:last-child { flex: 1; padding: 0 0 0 12px; text-align: left; }
.btn.on { background: #0062cc; }
.btn.on + .btn { padding-left: 12px; }
.search { display: flex; flex: none; }
.mag { display: grid; place-items: center; width: 41px; background: #e9ecef; border: 1px solid #ced4da; border-right: 0; border-radius: 4px 0 0 4px; }
.search input { width: 400px; padding: 1.500px 12px 0 12.500px; border: 1px solid #80bdff; box-shadow: 0 0 0 3px rgba(0,123,255,.25); outline: 0; background: #fff; }
.search input::placeholder { color: #6c757d; opacity: 1; }
.pool { display: flex; align-items: center; height: 47px; margin-left: 15px; }
.pool h3 { font-size: 20px; color: #007bff; }
.less { width: 54px; height: 23px; margin: 8px 0 0 11px; padding: 0; border-radius: 3px; background: #007bff; color: #fff; font-size: 10.500px; line-height: 23px; }
table { width: 927px; margin-left: 15px; table-layout: fixed; border-collapse: collapse; white-space: normal; }
.c1 { width: 271px; } .c2 { width: 111px; } .c3 { width: 283px; } .c4 { width: 112px; } .c5 { width: 150px; }
th, td { padding: 4.800px; border: 1px solid #dee2e6; text-align: left; }
th { height: 59px; padding-bottom: 3.800px; padding-right: 50px; vertical-align: bottom; border-bottom-width: 2px; }
th:nth-child(4) { padding-right: 4px; }
td { height: 65px; padding-top: 5.800px; vertical-align: top; background: #f2f2f2; }
td a { color: #007bff; }
td.break { word-break: break-all; }
.badge { display: inline-block; padding: 3px 4.800px; font-size: 12px; font-weight: 700; line-height: 12px; border-radius: 4px; color: #fff; background: #007bff; vertical-align: baseline; }
.badge.up { background: #28a745; }
.more { margin: 8px 0 0 8.500px; }

/* grafana */
.grafana { height: 688px; overflow: hidden; font: 14px Inter, sans-serif; letter-spacing: .17px; background: #111217; color: #ccccdc; }
.gnav { display: flex; align-items: center; height: 40px; padding-left: 121.500px; border-bottom: 1px solid #2e3035; background: #181b1f; }
.gnav > * { flex: none; }
.crumb { font-weight: 500; letter-spacing: -.05px; }
.sep { width: 23.500px; text-align: center; color: #a0a0ac; padding-bottom: 2px; }
.here { color: #8e8f99; }
.star, .save, .gear, .time { width: 16px; height: 16px; }
.star { margin-left: 16.500px; }
.public { width: 46px; height: 22px; margin-left: 17px; border: 1px solid #7d7e83; border-radius: 2px; font-size: 12px; line-height: 20px; text-align: center; color: #8e8f99; }
.save { margin-left: 163px; }
.gear { margin-left: 28px; }
.add, .share { display: flex; align-items: center; justify-content: center; gap: 3px; height: 24px; font-size: 12px; font-weight: 500; border-radius: 2px; }
.add { width: 57px; margin-left: 18px; border: 1px solid #46474d; }
.share { width: 50px; margin-left: 8px; color: #fff; background: #3d71d9; }
.divider { width: 1px; height: 24px; margin-left: 8px; background: #34363c; }
.time { margin-left: 18px; }
.range { margin-left: 10px; font-size: 12px; font-weight: 500; color: #6e9fff; }
.vars { display: flex; padding: 16px 0 0 16px; }
.vars > span { display: flex; align-items: center; height: 32px; padding-left: 8px; border: 1px solid #2e3035; border-radius: 2px; }
.vl { margin-right: 4px; font-size: 12px; font-weight: 500; color: #6e9fff; background: #181b1f; }
.vars .vs { margin-right: 16px; gap: 5px; border-color: #36383e; }
.vs svg { margin-top: -1px; }
.w85 { width: 85px; } .w81 { width: 81px; } .w40 { width: 40px; } .w68 { width: 68px; } .w46 { width: 46px; } .w154 { width: 154px; }
.row-head { display: flex; align-items: center; gap: 3px; height: 46px; padding-left: 23px; font-size: 16px; font-weight: 500; }
.row-head svg { margin-top: 3px; }
.stats { display: grid; grid-template-columns: repeat(6, 140.300px); gap: 8px; height: 144px; padding-left: 16px; }
.charts { display: grid; grid-template-columns: 585px 585px; grid-template-rows: 258px 258px; gap: 8px; padding-left: 16px; }
.panel { min-width: 0; overflow: hidden; border-radius: 2px; background: #181b1f; box-shadow: inset 0 0 0 1px #2e3035; }
.panel header { display: flex; align-items: center; height: 32px; padding: 3px 0 0 9px; font-weight: 500; }
.panel header svg { width: 15px; height: 15px; margin: -1px 0 0 16px; }
.gauge header span { width: 66.500px; }
.gauge header .full { width: 63.500px; }
.stat { width: 140px; height: 112px; }
.chart { width: 585px; height: 196px; }
.chart text, .stat text { font-family: Inter, sans-serif; }
.ax { font-size: 12px; letter-spacing: 0; fill: #c3c3d0; }
.end { text-anchor: end; }
.mid { text-anchor: middle; }
.val { font-size: 11px; letter-spacing: -.1px; fill: #5fae55; }
.grid { fill: none; stroke: #2b2e33; }
.track { fill: none; stroke: #22252b; stroke-width: 17; }
.fill { fill: none; stroke-width: 17; }
.ring { fill: none; stroke-width: 2; }
.green { stroke: #33a72c; } .orange { stroke: #d97628; } .red { stroke: #e03430; }
.tg, .to { text-anchor: middle; letter-spacing: .1px; }
.tg { fill: #33a72c; } .to { fill: #d97628; }
.legend { display: flex; gap: 10px; height: 24px; align-items: center; padding: 0 0 1px 13px; font-size: 12px; letter-spacing: .15px; }
.legend span { display: flex; align-items: center; gap: 8px; }
.legend span::before { content: ""; width: 14px; height: 4px; margin-top: 1px; border-radius: 2px; background: var(--k); }
.k1 { --k: #eab839; } .k2 { --k: #0a437c; } .k3 { --k: #890f02; } .k4 { --k: #ff780a; } .k5 { --k: #6d1f62; } .k6 { --k: #7eb26d; }
.k7 { --k: #e0f9d7; } .k8 { --k: #f2cc0c; } .k9 { --k: #052b51; }
```
